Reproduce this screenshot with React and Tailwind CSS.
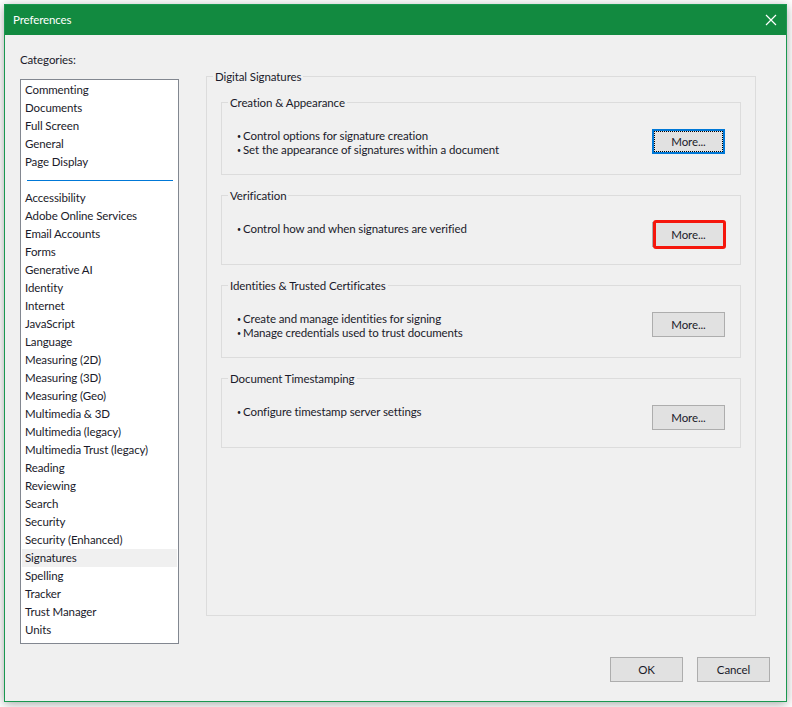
import React from 'react';

const groupA = ['Commenting', 'Documents', 'Full Screen', 'General', 'Page Display'];
const groupB = [
  'Accessibility', 'Adobe Online Services', 'Email Accounts', 'Forms', 'Generative AI', 'Identity',
  'Internet', 'JavaScript', 'Language', 'Measuring (2D)', 'Measuring (3D)', 'Measuring (Geo)',
  'Multimedia & 3D', 'Multimedia (legacy)', 'Multimedia Trust (legacy)', 'Reading', 'Reviewing',
  'Search', 'Security', 'Security (Enhanced)', 'Signatures', 'Spelling', 'Tracker', 'Trust Manager', 'Units',
];

const sections = [
  { title: 'Creation & Appearance', lines: ['Control options for signature creation', 'Set the appearance of signatures within a document'], focus: true },
  { title: 'Verification', lines: ['Control how and when signatures are verified'], marked: true },
  { title: 'Identities & Trusted Certificates', lines: ['Create and manage identities for signing', 'Manage credentials used to trust documents'] },
  { title: 'Document Timestamping', lines: ['Configure timestamp server settings'] },
];

const Row = ({ label }) => (
  <div className={`h-[18px] leading-[18px] pl-[3px] ${label === 'Signatures' ? 'bg-[#f0f0f0]' : ''}`}>{label}</div>
);

const MoreButton = ({ focus, marked }) => {
  if (focus) {
    return (
      <button className="w-[73px] h-[25px] border-2 border-[#0078d7] bg-[#e1e1e1]">
        <span className="flex h-full items-center justify-center border border-dotted border-black">More...</span>
      </button>
    );
  }
  if (marked) {
    return (
      <button className="relative w-[73px] h-[25px] border border-[#adadad] bg-[#e1e1e1]">
        More...
        <span className="absolute left-0 -right-[2px] -top-[3px] -bottom-[3px] border-[3px] border-[#f5160c] rounded-[3px]" />
      </button>
    );
  }
  return <button className="w-[73px] h-[25px] border border-[#adadad] bg-[#e1e1e1]">More...</button>;
};

export default function App() {
  return (
    <div className="w-[792px] h-[707px] bg-white pl-1 pt-1 overflow-hidden font-['Lato','Liberation_Sans',sans-serif] text-[11.5px] tracking-[-0.1px] text-[#1a1a2a]">
      <div className="w-[783px] h-[698px] flex flex-col border border-[#1a9850] bg-[#f0f0f0] shadow-[0_2px_10px_rgba(0,0,0,0.35)]">
        {/* Title bar */}
        <div className="h-[30px] shrink-0 flex items-center justify-between pl-2 pr-[9px] bg-[#128a40] text-white">
          <span>Preferences</span>
          <svg width="12" height="12" viewBox="0 0 12 12" stroke="white" strokeWidth="1.2">
            <path d="M1 1l10 10M11 1L1 11" />
          </svg>
        </div>

        <div className="flex-1 flex flex-col">
          <div className="flex pl-[15px] pr-[30px]">
            {/* Categories */}
            <div className="w-[159px] shrink-0">
              <div className="h-[16px] leading-[16px] mt-[17px] mb-[11px]">Categories:</div>
              <div className="h-[565px] border border-[#828790] bg-white p-px">
                {groupA.map((c) => <Row key={c} label={c} />)}
                <div className="h-[18px] flex items-center pl-[5px] pr-1">
                  <div className="h-px w-full bg-[#0078d7]" />
                </div>
                {groupB.map((c) => <Row key={c} label={c} />)}
              </div>
            </div>

            {/* Digital Signatures */}
            <fieldset className="ml-[27px] flex-1 mt-[33px] h-[548px] border border-[#dcdcdc]">
              <legend className="ml-[6px] px-[2px] h-4 leading-[18px]">Digital Signatures</legend>
              <div className="flex flex-col gap-[12px] mt-[10px] px-[14px]">
                {sections.map((s) => (
                  <fieldset key={s.title} className="border border-[#dcdcdc] pb-[17px]">
                    <legend className="ml-[6px] px-[2px] h-4 leading-[18px]">{s.title}</legend>
                    <div className="flex justify-between items-start mt-[19px] pl-4 pr-[15px]">
                      <ul className="leading-[14px]">
                        {s.lines.map((l) => (
                          <li key={l} className="flex"><span className="-ml-px w-[6px] text-[7px]">•</span>{l}</li>
                        ))}
                      </ul>
                      <MoreButton focus={s.focus} marked={s.marked} />
                    </div>
                  </fieldset>
                ))}
              </div>
            </fieldset>
          </div>

          {/* Footer */}
          <div className="flex justify-end gap-[14px] pr-4 mt-[13px]">
            <button className="w-[73px] h-[25px] border border-[#adadad] bg-[#e1e1e1]">OK</button>
            <button className="w-[73px] h-[25px] border border-[#adadad] bg-[#e1e1e1]">Cancel</button>
          </div>
        </div>
      </div>
    </div>
  );
}
